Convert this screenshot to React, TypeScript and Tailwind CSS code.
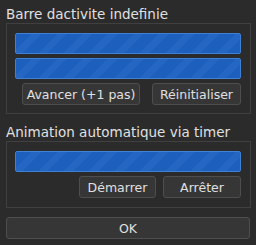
const font = { fontFamily: '"DejaVu Sans", sans-serif' };

function Bar() {
  return (
    <div className="h-[21px] rounded-[2px] border border-[#3f7fd4] bg-[repeating-linear-gradient(135deg,#1c5fbd_0px,#1c5fbd_11px,#2566c2_11px,#2566c2_18px)]" />
  );
}

function Button({ label, width }: { label: string; width: string }) {
  return (
    <button
      className={`${width} h-[22px] rounded-[3px] border border-[#4e4e4e] bg-[#363636] text-[12.5px] leading-[15px] text-[#e0e0e0]`}
    >
      {label}
    </button>
  );
}

export default function App() {
  return (
    <div
      className="flex h-[245px] w-[256px] flex-col bg-[#2b2b2b] pt-[7px] text-[#e0e0e0]"
      style={font}
    >
      <div className="ml-[6px] text-[13.5px] leading-[15px]">Barre dactivite indefinie</div>
      <div className="ml-[6px] mr-[5px] mt-[1px] flex flex-col gap-[4px] border border-[#404040] pb-[8px] pl-[8px] pr-[9px] pt-[9px]">
        <Bar />
        <Bar />
        <div className="flex justify-end gap-[12px]">
          <Button label="Avancer (+1 pas)" width="w-[118px]" />
          <Button label="Réinitialiser" width="w-[89px]" />
        </div>
      </div>

      <div className="ml-[6px] mt-[11px] text-[13.5px] leading-[15px]">Animation automatique via timer</div>
      <div className="ml-[6px] mr-[5px] mt-[1px] flex flex-col gap-[4px] border border-[#404040] pb-[9px] pl-[8px] pr-[9px] pt-[9px]">
        <Bar />
        <div className="flex justify-end gap-[7px]">
          <Button label="Démarrer" width="w-[77px]" />
          <Button label="Arrêter" width="w-[78px]" />
        </div>
      </div>

      <div className="ml-[6px] mr-[6px] mt-[9px] flex">
        <Button label="OK" width="w-full" />
      </div>
    </div>
  );
}
